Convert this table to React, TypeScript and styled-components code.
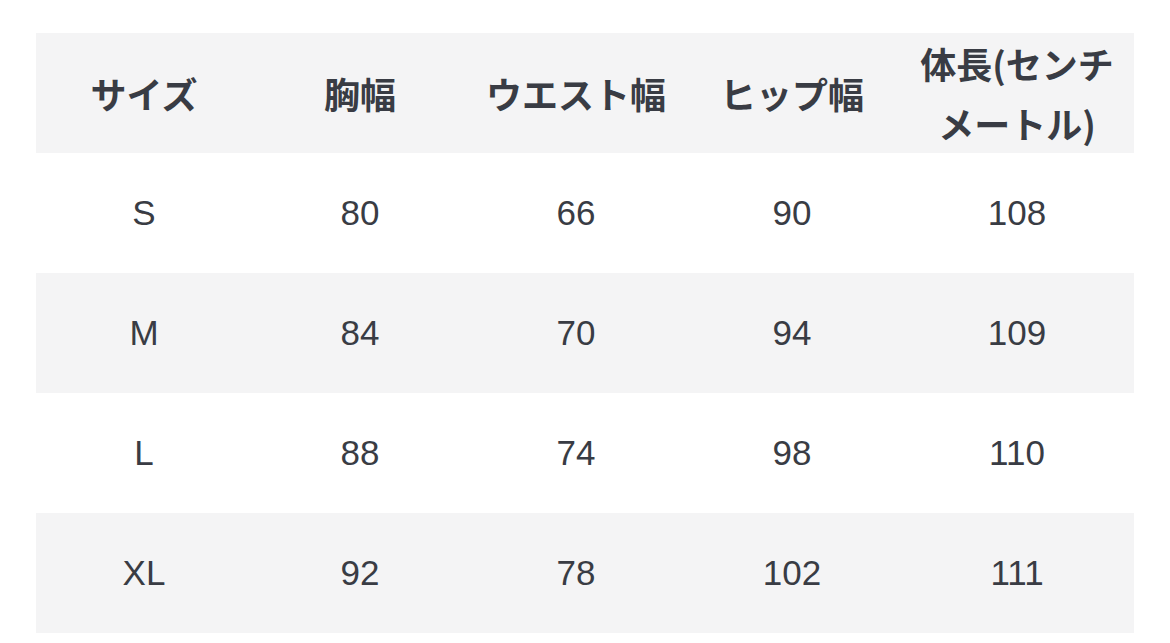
import React from "react";
import styled, { createGlobalStyle } from "styled-components";

const Global = createGlobalStyle`
  html, body { margin: 0; padding: 0; background: #ffffff; }
  body { font-family: "Liberation Sans", "Noto Sans CJK JP", sans-serif; }
`;

const Page = styled.div`
  padding: 33px 36px 0 36px;
  width: 1098px;
`;

const Table = styled.div`
  display: grid;
  grid-template-columns: 216px 216px 216px 216px 1fr;
`;

const Row = styled.div<{ $shaded: boolean }>`
  display: contents;
  & > div {
    background: ${(p) => (p.$shaded ? "#f4f4f5" : "#ffffff")};
  }
`;

const Cell = styled.div<{ $head?: boolean }>`
  height: 120px;
  box-sizing: border-box;
  padding: 0 10px;
  display: flex;
  align-items: center;
  justify-content: center;
  text-align: center;
  color: #393c44;
  font-size: ${(p) => (p.$head ? "36px" : "35px")};
  line-height: 60px;
  font-weight: ${(p) => (p.$head ? 700 : 400)};
  font-family: ${(p) =>
    p.$head
      ? `"Noto Sans CJK JP", "Liberation Sans", sans-serif`
      : `"Liberation Sans", "Noto Sans CJK JP", sans-serif`};
`;

const headers = ["サイズ", "胸幅", "ウエスト幅", "ヒップ幅", "体長(センチメートル)"];
const rows = [
  ["S", "80", "66", "90", "108"],
  ["M", "84", "70", "94", "109"],
  ["L", "88", "74", "98", "110"],
  ["XL", "92", "78", "102", "111"],
];

export default function App() {
  return (
    <>
      <Global />
      <Page>
        <Table>
          <Row $shaded>
            {headers.map((h) => (
              <Cell $head key={h}>{h}</Cell>
            ))}
          </Row>
          {rows.map((r, i) => (
            <Row $shaded={i % 2 === 1} key={r[0]}>
              {r.map((c, j) => (
                <Cell key={j}>{c}</Cell>
              ))}
            </Row>
          ))}
        </Table>
      </Page>
    </>
  );
}
